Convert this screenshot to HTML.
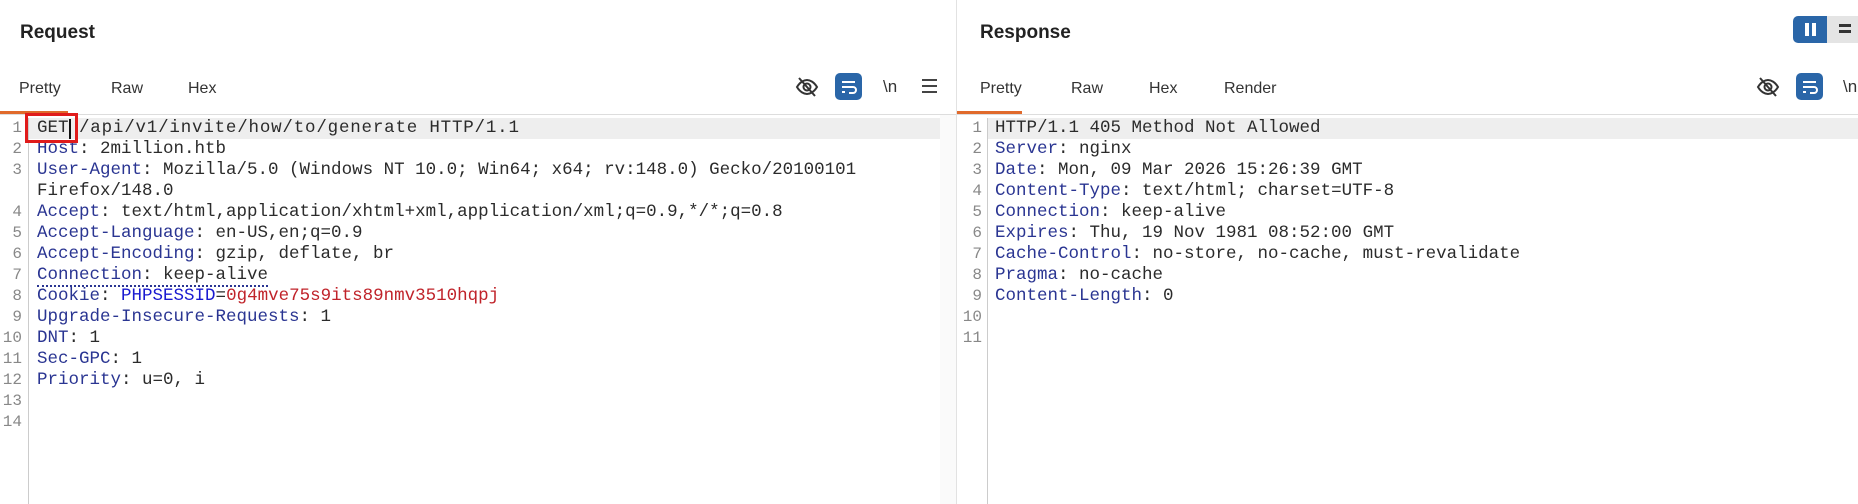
<!DOCTYPE html>
<html><head><meta charset="utf-8"><style>
*{margin:0;padding:0;box-sizing:border-box}
body{width:1858px;height:504px;background:#fff;position:relative;overflow:hidden;font-family:"Liberation Sans",sans-serif;color:#222}
.abs{position:absolute}
.title{font-weight:bold;font-size:19px;top:22px}
.tab{font-size:16px;top:80px;color:#333}
.code{font-family:"Liberation Mono",monospace;font-size:17.5px;line-height:21px;white-space:pre;color:#2b2b2b}
.num{font-family:"Liberation Mono",monospace;font-size:16px;line-height:21px;color:#888;text-align:right;white-space:pre}
.k{color:#2a3592}
.b{color:#1a1ad0}
.r{color:#c0232a}
.dot{border-bottom:2px dotted #2a3592}
</style></head><body>
<!-- left panel -->
<div class="abs title" style="left:20px">Request</div>
<div class="abs tab" style="left:19px">Pretty</div>
<div class="abs tab" style="left:111px">Raw</div>
<div class="abs tab" style="left:188px">Hex</div>
<div class="abs" style="left:0;top:114px;width:956px;height:1px;background:#ddd"></div>
<div class="abs" style="left:0;top:111px;width:68px;height:3px;background:#e06a2c"></div>
<svg class="abs" style="left:795px;top:76px" width="24" height="22" viewBox="0 0 24 22"><path d="M2 11c3-5 7-7 10-7s7 2 10 7c-3 5-7 7-10 7s-7-2-10-7z" fill="none" stroke="#333" stroke-width="2"/><circle cx="12" cy="11" r="3.5" fill="none" stroke="#333" stroke-width="2"/><path d="M4 2l16 18" stroke="#333" stroke-width="2"/></svg>
<div class="abs" style="left:835px;top:73px;width:27px;height:27px;background:#2a66a8;border-radius:5px"></div>
<svg class="abs" style="left:835px;top:73px" width="27" height="27" viewBox="0 0 27 27"><path d="M7 9h13M7 14h11a3 3 0 0 1 0 6h-4M7 19h3" fill="none" stroke="#fff" stroke-width="2"/></svg>
<div class="abs" style="left:883px;top:77px;font-size:17px;color:#333">\n</div>
<div class="abs" style="left:922px;top:79px;width:15px;height:2px;background:#444;box-shadow:0 6px 0 #444,0 12px 0 #444"></div>
<div class="abs" style="left:28px;top:118px;width:912px;height:21px;background:#eeeeee"></div>
<div class="abs" style="left:28px;top:118px;width:1px;height:386px;background:#ccc"></div>
<div class="abs" style="left:940px;top:115px;width:16px;height:389px;background:#fafafa"></div>
<div class="abs" style="left:956px;top:0;width:1px;height:504px;background:#e2e2e2"></div>
<div class="abs num" style="left:0;top:118px;width:22px">1
2
3

4
5
6
7
8
9
10
11
12
13
14</div>
<div class="abs code" style="left:37px;top:118px">GET
<span class="k">Host</span>: 2million.htb
<span class="k">User-Agent</span>: Mozilla/5.0 (Windows NT 10.0; Win64; x64; rv:148.0) Gecko/20100101
Firefox/148.0
<span class="k">Accept</span>: text/html,application/xhtml+xml,application/xml;q=0.9,*/*;q=0.8
<span class="k">Accept-Language</span>: en-US,en;q=0.9
<span class="k">Accept-Encoding</span>: gzip, deflate, br
<span class="dot"><span class="k">Connection</span>: keep-alive</span>
<span class="k">Cookie</span>: <span class="b">PHPSESSID</span>=<span class="r">0g4mve75s9its89nmv3510hqpj</span>
<span class="k">Upgrade-Insecure-Requests</span>: 1
<span class="k">DNT</span>: 1
<span class="k">Sec-GPC</span>: 1
<span class="k">Priority</span>: u=0, i</div>
<div class="abs code" style="left:79px;top:118px;letter-spacing:0.8px">/api/v1/invite/how/to/generate HTTP/1.1</div>
<div class="abs" style="left:25px;top:113px;width:53px;height:30px;border:3px solid #e01b1b"></div>
<div class="abs" style="left:69px;top:119px;width:2px;height:20px;background:#111"></div>
<!-- right panel -->
<div class="abs title" style="left:980px">Response</div>
<div class="abs" style="left:1793px;top:16px;width:34px;height:27px;background:#2a66a8;border-radius:5px 0 0 5px"></div>
<div class="abs" style="left:1805px;top:23px;width:4px;height:13px;background:#fff;box-shadow:7px 0 0 #fff"></div>
<div class="abs" style="left:1827px;top:16px;width:31px;height:27px;background:#e4e4e4"></div>
<div class="abs" style="left:1839px;top:24px;width:12px;height:3px;background:#333;box-shadow:0 6px 0 #333"></div>
<div class="abs tab" style="left:980px">Pretty</div>
<div class="abs tab" style="left:1071px">Raw</div>
<div class="abs tab" style="left:1149px">Hex</div>
<div class="abs tab" style="left:1224px">Render</div>
<div class="abs" style="left:957px;top:114px;width:901px;height:1px;background:#ddd"></div>
<div class="abs" style="left:957px;top:111px;width:65px;height:3px;background:#e06a2c"></div>
<svg class="abs" style="left:1756px;top:76px" width="24" height="22" viewBox="0 0 24 22"><path d="M2 11c3-5 7-7 10-7s7 2 10 7c-3 5-7 7-10 7s-7-2-10-7z" fill="none" stroke="#333" stroke-width="2"/><circle cx="12" cy="11" r="3.5" fill="none" stroke="#333" stroke-width="2"/><path d="M4 2l16 18" stroke="#333" stroke-width="2"/></svg>
<div class="abs" style="left:1796px;top:73px;width:27px;height:27px;background:#2a66a8;border-radius:5px"></div>
<svg class="abs" style="left:1796px;top:73px" width="27" height="27" viewBox="0 0 27 27"><path d="M7 9h13M7 14h11a3 3 0 0 1 0 6h-4M7 19h3" fill="none" stroke="#fff" stroke-width="2"/></svg>
<div class="abs" style="left:1843px;top:77px;font-size:17px;color:#333">\n</div>
<div class="abs" style="left:987px;top:118px;width:871px;height:21px;background:#eeeeee"></div>
<div class="abs" style="left:987px;top:118px;width:1px;height:386px;background:#ccc"></div>
<div class="abs num" style="left:958px;top:118px;width:24px">1
2
3
4
5
6
7
8
9
10
11</div>
<div class="abs code" style="left:995px;top:118px">HTTP/1.1 405 Method Not Allowed
<span class="k">Server</span>: nginx
<span class="k">Date</span>: Mon, 09 Mar 2026 15:26:39 GMT
<span class="k">Content-Type</span>: text/html; charset=UTF-8
<span class="k">Connection</span>: keep-alive
<span class="k">Expires</span>: Thu, 19 Nov 1981 08:52:00 GMT
<span class="k">Cache-Control</span>: no-store, no-cache, must-revalidate
<span class="k">Pragma</span>: no-cache
<span class="k">Content-Length</span>: 0</div>
</body></html>
